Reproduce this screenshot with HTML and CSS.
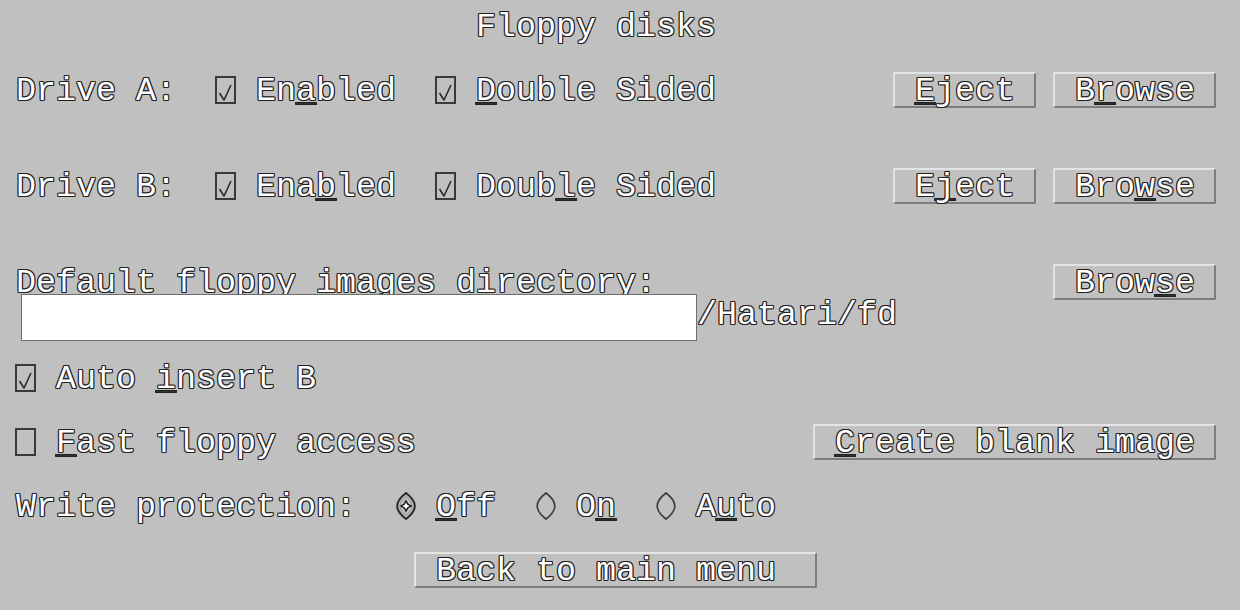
FILE: index.html
```html
<!DOCTYPE html>
<html>
<head>
<meta charset="utf-8">
<link rel="stylesheet" href="styles.css">
</head>
<body>
<div class="dlg">
  <div class="row title">Floppy disks</div>

  <div class="row mt1">
    <span>Drive A:</span>
    <span class="cb g2"><svg width="21" height="28" viewBox="0 0 21 28"><rect x="1" y="1" width="19" height="26" class="box"/><path d="M4.5 17 L9 24 L16 9" class="tick"/></svg></span>
    <span class="g1">En<u class="k">a</u>bled</span>
    <span class="cb g2"><svg width="21" height="28" viewBox="0 0 21 28"><rect x="1" y="1" width="19" height="26" class="box"/><path d="M4.5 17 L9 24 L16 9" class="tick"/></svg></span>
    <span class="g1"><u class="k">D</u>ouble Sided</span>
    <span class="btns">
      <span class="btn w7"><u class="k">E</u>ject</span>
      <span class="btn w8 next">B<u class="k">r</u>owse</span>
    </span>
  </div>

  <div class="row mt2">
    <span>Drive B:</span>
    <span class="cb g2"><svg width="21" height="28" viewBox="0 0 21 28"><rect x="1" y="1" width="19" height="26" class="box"/><path d="M4.5 17 L9 24 L16 9" class="tick"/></svg></span>
    <span class="g1">Ena<u class="k">b</u>led</span>
    <span class="cb g2"><svg width="21" height="28" viewBox="0 0 21 28"><rect x="1" y="1" width="19" height="26" class="box"/><path d="M4.5 17 L9 24 L16 9" class="tick"/></svg></span>
    <span class="g1">Doub<u class="k">l</u>e Sided</span>
    <span class="btns">
      <span class="btn w7">E<u class="k">j</u>ect</span>
      <span class="btn w8 next">Bro<u class="k">w</u>se</span>
    </span>
  </div>

  <div class="row mt2">
    <span>Default floppy images directory:</span>
    <span class="btns">
      <span class="btn w8">Brow<u class="k">s</u>e</span>
    </span>
  </div>

  <div class="row">
    <span class="field"></span>
    <span>/Hatari/fd</span>
  </div>

  <div class="row mt1">
    <span class="cb"><svg width="21" height="28" viewBox="0 0 21 28"><rect x="1" y="1" width="19" height="26" class="box"/><path d="M4.5 17 L9 24 L16 9" class="tick"/></svg></span>
    <span class="g1">Auto <u class="k">i</u>nsert B</span>
  </div>

  <div class="row mt1">
    <span class="cb"><svg width="21" height="28" viewBox="0 0 21 28"><rect x="1" y="1" width="19" height="26" class="box"/></svg></span>
    <span class="g1"><u class="k">F</u>ast floppy access</span>
    <span class="btns">
      <span class="btn w20"><u class="k">C</u>reate blank image</span>
    </span>
  </div>

  <div class="row mt1">
    <span>Write protection:</span>
    <span class="rb g2"><svg width="20" height="28" viewBox="0 0 20 28"><path d="M10 1 C16.5 6 18.8 10 18.8 14 C18.8 18 16.5 22 10 27 C3.5 22 1.2 18 1.2 14 C1.2 10 3.5 6 10 1 Z" class="lens sel"/><path d="M10 4.5 C14.5 8 16 11 16 14 C16 17 14.5 20 10 23.5 C5.5 20 4 17 4 14 C4 11 5.5 8 10 4.5 Z" class="lens2"/><path d="M10 9 L11.8 12.2 L15 14 L11.8 15.8 L10 19 L8.2 15.8 L5 14 L8.2 12.2 Z" class="dot"/></svg></span>
    <span class="g1"><u class="k">O</u>ff</span>
    <span class="rb g2"><svg width="20" height="28" viewBox="0 0 20 28"><path d="M10 1 C16.5 6 18.8 10 18.8 14 C18.8 18 16.5 22 10 27 C3.5 22 1.2 18 1.2 14 C1.2 10 3.5 6 10 1 Z" class="lens"/></svg></span>
    <span class="g1">O<u class="k">n</u></span>
    <span class="rb g2"><svg width="20" height="28" viewBox="0 0 20 28"><path d="M10 1 C16.5 6 18.8 10 18.8 14 C18.8 18 16.5 22 10 27 C3.5 22 1.2 18 1.2 14 C1.2 10 3.5 6 10 1 Z" class="lens"/></svg></span>
    <span class="g1">A<u class="k">u</u>to</span>
  </div>

  <div class="row mt1">
    <span class="btn w20 back">Back to main menu</span>
  </div>
</div>
</body>
</html>
```

FILE: styles.css
```css
html, body {
  margin: 0;
  padding: 0;
  background: #c0c0c0;
}

body {
  width: 1240px;
  height: 610px;
  overflow: hidden;
  font-family: "Liberation Mono", "DejaVu Sans Mono", monospace;
  font-size: 33.333px;
  line-height: 32px;
  color: #ffffff;
  text-shadow:
    1px 0 0 #202020,
    -1px 0 0 #202020,
    0 1px 0 #202020,
    0 -1px 0 #202020,
    1px 1px 0 #303030,
    -1px 1px 0 #303030,
    1px -1px 0 #303030,
    -1px -1px 0 #303030;
}

.dlg {
  width: 1200px;
  padding: 11px 0 0 16px;
}

.row {
  display: flex;
  align-items: flex-start;
  height: 32px;
  white-space: pre;
}

.title {
  padding-left: 460px;
}

.mt1 { margin-top: 32px; }
.mt2 { margin-top: 64px; }

.g1 { margin-left: 20px; }
.g2 { margin-left: 40px; }

.k {
  text-decoration: underline;
  text-decoration-color: #303030;
  text-decoration-thickness: 1px;
  text-underline-offset: 3px;
}

.cb {
  display: block;
  width: 21px;
  height: 28px;
  margin-top: 1px;
  margin-right: -1px;
  transform: translateX(-1px);
}

.cb svg, .rb svg {
  display: block;
}

.box {
  fill: none;
  stroke: #3a3a3a;
  stroke-width: 2;
}

.tick {
  fill: none;
  stroke: #2a2a2a;
  stroke-width: 1.6;
  stroke-linejoin: round;
}

.rb {
  display: block;
  width: 20px;
  height: 28px;
  margin-top: 1px;
}

.lens {
  fill: none;
  stroke: #3a3a3a;
  stroke-width: 1.6;
}

.lens.sel {
  stroke: #2a2a2a;
  stroke-width: 2;
}

.lens2 {
  fill: none;
  stroke: #8a8a8a;
  stroke-width: 1;
}

.dot {
  fill: #ffffff;
  stroke: #1a1a1a;
  stroke-width: 1.4;
}

.btns {
  display: flex;
  margin-left: auto;
}

.btn {
  display: block;
  box-sizing: border-box;
  height: 36px;
  margin-top: -3px;
  margin-left: -2px;
  padding: 1px 0 0 20px;
  border: 2px solid;
  border-color: #e4e4e4 #7c7c7c #7c7c7c #e4e4e4;
  border-radius: 2px;
  background: #c0c0c0;
}

.btn.next { margin-left: 17px; }

.w7 { width: 143px; }
.w8 { width: 163px; }
.w20 { width: 403px; }

.back {
  margin-left: 398px;
}

.field {
  display: block;
  position: relative;
  box-sizing: border-box;
  width: 676px;
  height: 47px;
  margin-top: -5px;
  margin-left: 5px;
  background: #ffffff;
  border: 1px solid #6e6e6e;
}
```
